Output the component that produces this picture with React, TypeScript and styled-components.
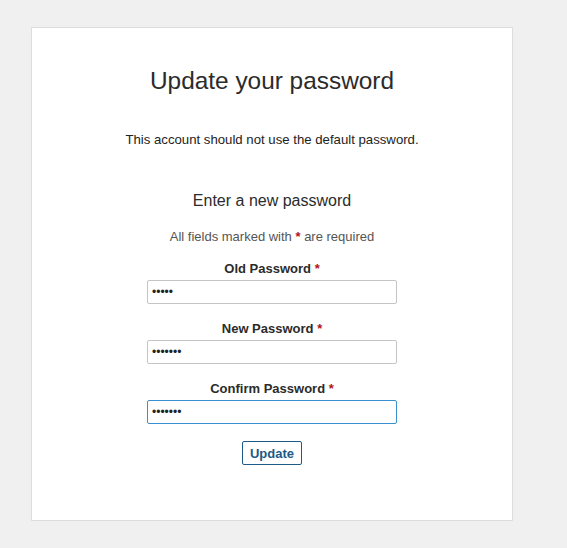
import React from 'react'
import styled, { createGlobalStyle } from 'styled-components'

const GlobalStyle = createGlobalStyle`
  html, body {
    margin: 0;
    padding: 0;
    background-color: #f0f0f0;
    font-family: "Liberation Sans", Arial, Helvetica, sans-serif;
    color: #333;
  }
`

const Page = styled.div`
  width: 567px;
  height: 548px;
  padding: 27px 0 0 31px;
  box-sizing: border-box;
`

const Card = styled.div`
  width: 482px;
  height: 494px;
  box-sizing: border-box;
  background-color: #fff;
  border: 1px solid #ddd;
  display: flex;
  flex-direction: column;
  align-items: center;
  padding-top: 38px;
`

const Title = styled.h1`
  margin: 0;
  font-size: 24.4px;
  font-weight: normal;
  line-height: 30px;
  color: #2b2b2b;
`

const Notice = styled.p`
  margin: 36px 0 0;
  font-size: 13.2px;
  line-height: 16px;
  color: #222;
`

const SubTitle = styled.h2`
  margin: 43px 0 0;
  font-size: 16px;
  font-weight: normal;
  line-height: 20px;
  color: #2b2b2b;
`

const Hint = styled.p`
  margin: 18px 0 0;
  font-size: 13px;
  line-height: 15px;
  color: #555;
`

const Star = styled.span`
  color: #b0131a;
  font-weight: bold;
`

const Form = styled.form`
  display: flex;
  flex-direction: column;
  align-items: center;
  margin-top: 8px;
`

const Field = styled.div`
  display: flex;
  flex-direction: column;
  align-items: center;
  margin-top: 17px;
  &:first-child {
    margin-top: 9px;
  }
`

const Label = styled.label`
  font-size: 13px;
  font-weight: bold;
  line-height: 16px;
  color: #2b2b2b;
  margin-bottom: 3px;
`

interface IInput {
  active?: boolean
}
const Input = styled.input<IInput>`
  width: 250px;
  height: 24px;
  box-sizing: border-box;
  border: 1px solid ${props => (props.active ? '#3a8fd0' : '#c4c4c4')};
  border-radius: 2px;
  padding: 0 4px;
  font-family: inherit;
  font-size: 12px;
  color: #222;
  outline: none;
  background: #fff;
`

const Button = styled.button`
  margin-top: 17px;
  height: 24px;
  padding: 0 7px;
  border: 1px solid #1d5a85;
  border-radius: 2px;
  background: #fff;
  color: #1d5a85;
  font-family: inherit;
  font-size: 13px;
  font-weight: bold;
`

const fields = [
  { label: 'Old Password', value: '12345' },
  { label: 'New Password', value: '1234567' },
  { label: 'Confirm Password', value: '1234567', active: true },
]

const App = () => {
  return (
    <Page>
      <GlobalStyle />
      <Card>
        <Title>Update your password</Title>
        <Notice>This account should not use the default password.</Notice>
        <SubTitle>Enter a new password</SubTitle>
        <Hint>All fields marked with <Star>*</Star> are required</Hint>
        <Form onSubmit={e => e.preventDefault()}>
          {fields.map(f => (
            <Field key={f.label}>
              <Label>{f.label} <Star>*</Star></Label>
              <Input type='password' defaultValue={f.value} active={f.active} />
            </Field>
          ))}
          <Button type='submit'>Update</Button>
        </Form>
      </Card>
    </Page>
  )
}

export default App
